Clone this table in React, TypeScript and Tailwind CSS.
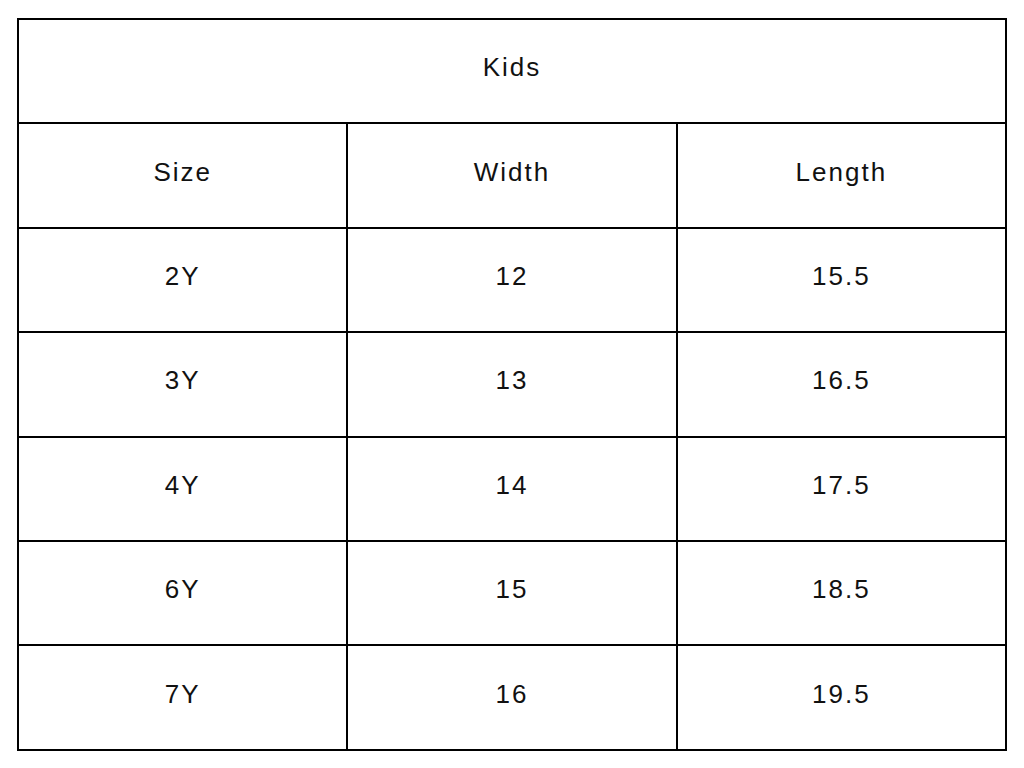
const rows = [
  ["2Y", "12", "15.5"],
  ["3Y", "13", "16.5"],
  ["4Y", "14", "17.5"],
  ["6Y", "15", "18.5"],
  ["7Y", "16", "19.5"],
];

const cell = "border-2 border-black h-[104.4px] pb-[7px] text-center align-middle";

export default function App() {
  return (
    <div className="w-[1024px] h-[768px] bg-white pt-[18px] pl-[17px] font-['Liberation_Sans',sans-serif] text-[26px] tracking-[2px] text-[#111]">
      <table className="w-[990px] border-collapse table-fixed">
        <tbody>
          <tr>
            <td colSpan={3} className={cell}>
              Kids
            </td>
          </tr>
          <tr>
            <td className={cell}>Size</td>
            <td className={cell}>Width</td>
            <td className={cell}>Length</td>
          </tr>
          {rows.map((r) => (
            <tr key={r[0]}>
              {r.map((v, i) => (
                <td key={i} className={cell}>
                  {v}
                </td>
              ))}
            </tr>
          ))}
        </tbody>
      </table>
    </div>
  );
}
